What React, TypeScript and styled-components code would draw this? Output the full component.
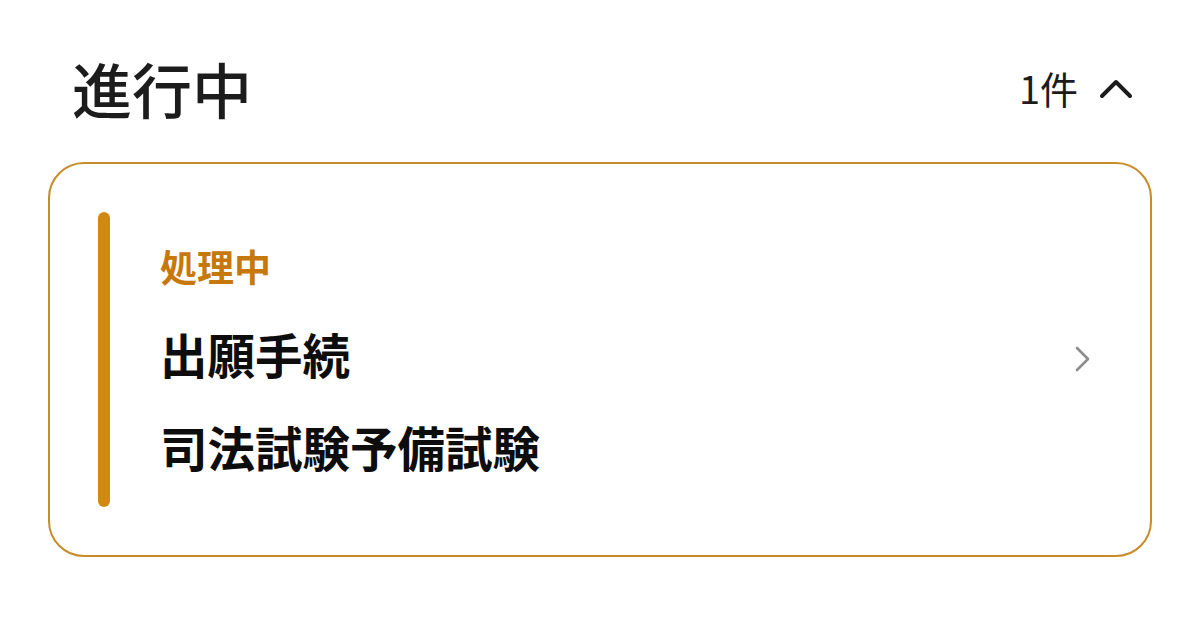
import React from 'react';
import styled, { createGlobalStyle } from 'styled-components';

const GlobalStyle = createGlobalStyle`
  html, body {
    margin: 0;
    padding: 0;
    background: #ffffff;
  }
  body {
    font-family: "Noto Sans CJK JP", "Noto Sans", sans-serif;
    color: #1a1a1a;
  }
`;

const Page = styled.div`
  width: 1200px;
  height: 630px;
  box-sizing: border-box;
  padding: 27px 48px 0;
`;

const Header = styled.header`
  height: 122px;
  display: flex;
  align-items: center;
  justify-content: space-between;
  padding: 0 19px 0 24px;
  margin-bottom: 13px;
`;

const Title = styled.h1`
  margin: 0;
  font-size: 60px;
  font-weight: 500;
  line-height: 1;
  color: #1c1c1c;
`;

const Count = styled.div`
  display: flex;
  align-items: center;
  gap: 21px;
  font-size: 38px;
  font-weight: 400;
  color: #1c1c1c;
  line-height: 1;
`;

const Card = styled.section`
  border: 2px solid #c98a28;
  border-radius: 36px;
  padding: 48px;
  display: flex;
  gap: 50px;
`;

const AccentBar = styled.div`
  width: 12px;
  flex-shrink: 0;
  border-radius: 6px;
  background: #d08a12;
`;

const Body = styled.div`
  flex: 1;
  padding: 14px 0;
`;

const Status = styled.div`
  font-size: 37px;
  font-weight: 700;
  line-height: 81px;
  color: #c7780c;
`;

const ItemRow = styled.div`
  display: flex;
  align-items: center;
  justify-content: space-between;
`;

const ItemText = styled.div`
  font-size: 47.5px;
  font-weight: 700;
  line-height: 93px;
  color: #0d0d0d;
`;

const Chevron = styled.svg`
  margin-right: 10px;
  margin-top: 10px;
`;

const App: React.FC = () => {
  return (
    <>
      <GlobalStyle />
      <Page>
        <Header>
          <Title>進行中</Title>
          <Count>
            <span>1件</span>
            <svg width="34" height="22" viewBox="0 0 34 22">
              <polyline
                points="3,19 17,5 31,19"
                fill="none"
                stroke="#1c1c1c"
                strokeWidth="4"
                strokeLinecap="round"
                strokeLinejoin="round"
              />
            </svg>
          </Count>
        </Header>

        <Card>
          <AccentBar />
          <Body>
            <Status>処理中</Status>
            <ItemRow>
              <ItemText>出願手続</ItemText>
              <Chevron width="18" height="28" viewBox="0 0 18 28">
                <polyline
                  points="3,3 14,14 3,25"
                  fill="none"
                  stroke="#8c8c8c"
                  strokeWidth="2.6"
                  strokeLinecap="round"
                  strokeLinejoin="round"
                />
              </Chevron>
            </ItemRow>
            <ItemText>司法試験予備試験</ItemText>
          </Body>
        </Card>
      </Page>
    </>
  );
};

export default App;
